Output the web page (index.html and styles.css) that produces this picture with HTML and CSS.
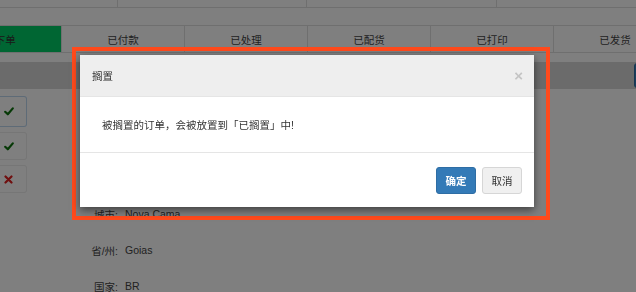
FILE: index.html
```html
<!DOCTYPE html>
<html lang="zh-CN">

<head>
  <meta charset="UTF-8">
  <meta name="viewport" content="width=device-width, initial-scale=1.0">
  <link rel="stylesheet" href="styles.css">
</head>

<body>
  <div class="order-page">
    <div class="top-row">
      <div class="cell" style="width: 118px"></div>
      <div class="cell" style="width: 189px"></div>
      <div class="cell" style="width: 190px"></div>
      <div class="cell"></div>
    </div>

    <div class="status-tabs">
      <div class="tab active">已下单</div>
      <div class="tab">已付款</div>
      <div class="tab">已处理</div>
      <div class="tab">已配货</div>
      <div class="tab">已打印</div>
      <div class="tab">已发货</div>
    </div>

    <div class="toolbar">
      <button class="btn-tool" type="button"></button>
    </div>

    <div class="actions">
      <button class="act focus" type="button">
        <svg width="10" height="9" viewBox="0 0 10 9"><path d="M1.2 4.8 L3.8 7.3 L8.8 1.4" fill="none" stroke="#0d720d" stroke-width="2.2" stroke-linecap="round" stroke-linejoin="round"/></svg>
      </button>
      <button class="act" type="button">
        <svg width="10" height="9" viewBox="0 0 10 9"><path d="M1.2 4.8 L3.8 7.3 L8.8 1.4" fill="none" stroke="#0d720d" stroke-width="2.2" stroke-linecap="round" stroke-linejoin="round"/></svg>
      </button>
      <button class="act" type="button">
        <svg width="9" height="9" viewBox="0 0 9 9"><path d="M1.5 1.5 L7.5 7.5 M7.5 1.5 L1.5 7.5" fill="none" stroke="#e01e1e" stroke-width="2.2" stroke-linecap="round"/></svg>
      </button>
    </div>

    <div class="address">
      <div class="row"><span class="label">城市:</span><span class="value">Nova Cama</span></div>
      <div class="row"><span class="label">省/州:</span><span class="value">Goias</span></div>
      <div class="row"><span class="label">国家:</span><span class="value">BR</span></div>
    </div>
  </div>

  <div class="backdrop"></div>

  <div class="highlight">
    <div class="modal">
      <div class="modal-header">
        <span class="modal-title">搁置</span>
        <span class="close">×</span>
      </div>
      <div class="modal-body">被搁置的订单，会被放置到「已搁置」中!</div>
      <div class="modal-footer">
        <button class="btn btn-primary" type="button">确定</button>
        <button class="btn btn-default" type="button">取消</button>
      </div>
    </div>
  </div>
</body>

</html>
```

FILE: styles.css
```css
body {
  margin: 0;
  font-family: "Liberation Sans", "Noto Sans CJK SC", sans-serif;
  background-color: #ffffff;
  color: #444444;
  overflow: hidden;
}

.order-page {
  width: 636px;
  height: 292px;
  overflow: hidden;
}

.top-row {
  display: flex;
  height: 7px;
  border-bottom: 1px solid #dedede;
}

.top-row .cell {
  border-right: 1px solid #dedede;
  box-sizing: border-box;
}

.top-row .cell:last-child {
  flex: 1;
  border-right: none;
}

.status-tabs {
  display: flex;
  margin-top: 17px;
  margin-left: -61px;
  height: 26px;
  border-top: 1px solid #dedede;
  border-bottom: 1px solid #dedede;
}

.status-tabs .tab {
  flex: none;
  width: 123px;
  box-sizing: border-box;
  border-right: 1px solid #dedede;
  display: flex;
  align-items: center;
  justify-content: center;
  font-size: 10.5px;
  color: #444444;
}

.status-tabs .tab.active {
  background-color: #00cc66;
  color: #333333;
}

.toolbar {
  display: flex;
  justify-content: flex-end;
  margin-top: 9px;
  height: 27px;
  background-color: #d6d6d6;
  align-items: center;
}

.toolbar .btn-tool {
  width: 20px;
  height: 25px;
  margin-right: -18px;
  border: 1px solid #2e6da4;
  border-radius: 3px;
  background-color: #337ab7;
  padding: 0;
}

.actions {
  display: flex;
  flex-direction: column;
  gap: 5px;
  margin-top: 7px;
  width: 27px;
}

.actions .act {
  width: 27px;
  height: 28px;
  padding: 0 0 0 4px;
  display: flex;
  align-items: center;
  justify-content: flex-start;
  background-color: #ffffff;
  border: 1px solid #ececec;
  border-left: none;
  border-radius: 0 3px 3px 0;
}

.actions .act.focus {
  height: 31px;
  border-color: #bcd6ef;
}

.address {
  margin-top: 3px;
}

.address .row {
  display: flex;
  align-items: center;
  height: 36px;
  font-size: 10.5px;
}

.address .label {
  width: 118px;
  text-align: right;
  color: #444444;
}

.address .value {
  margin-left: 7px;
  color: #444444;
}

.backdrop {
  position: fixed;
  top: 0;
  left: 0;
  right: 0;
  bottom: 0;
  background-color: rgba(0, 0, 0, 0.5);
}

.highlight {
  position: absolute;
  top: 47px;
  left: 72px;
  width: 462px;
  padding: 4px 4px 9px 4px;
  border: 4px solid #ff4a1c;
}

.modal {
  width: 454px;
  background-color: #ffffff;
  box-shadow: 0 3px 8px rgba(0, 0, 0, 0.5);
}

.modal-header {
  display: flex;
  align-items: center;
  justify-content: space-between;
  height: 41px;
  padding: 0 12px;
  background-color: #eeeeee;
  border-bottom: 1px solid #e5e5e5;
}

.modal-title {
  font-size: 10.5px;
  color: #333333;
}

.modal-header .close {
  font-size: 15px;
  font-weight: bold;
  color: #c4c4c4;
  line-height: 1;
  margin-right: -1px;
}

.modal-body {
  display: flex;
  align-items: center;
  height: 55px;
  padding-left: 22px;
  font-size: 10.5px;
  color: #333333;
  border-bottom: 1px solid #e5e5e5;
}

.modal-footer {
  display: flex;
  justify-content: flex-end;
  gap: 6px;
  padding: 14px 12px 13px;
}

.btn {
  width: 40px;
  height: 27px;
  padding: 0;
  font-family: "Liberation Sans", "Noto Sans CJK SC", sans-serif;
  font-size: 10.5px;
  border-radius: 3px;
  cursor: pointer;
}

.btn-primary {
  background-color: #337ab7;
  border: 1px solid #2e6da4;
  color: #ffffff;
  font-weight: bold;
}

.btn-default {
  background-color: #f0f0f0;
  border: 1px solid #d6d6d6;
  color: #333333;
}
```
